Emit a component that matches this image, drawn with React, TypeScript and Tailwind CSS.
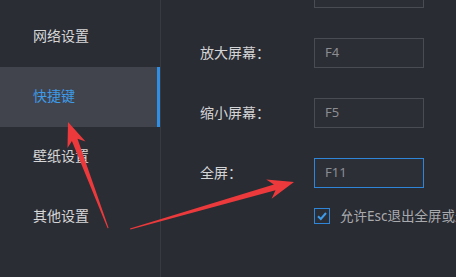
import React from 'react';

const menu = ['网络设置', '快捷键', '壁纸设置', '其他设置'];

const rows = [
  { label: '', value: '' },
  { label: '放大屏幕：', value: 'F4' },
  { label: '缩小屏幕：', value: 'F5' },
  { label: '全屏：', value: 'F11', focused: true },
];

function Arrows() {
  return (
    <svg className="absolute inset-0 pointer-events-none" width="456" height="277" viewBox="0 0 456 277">
      <polygon
        points="68,122 85.5,141.5 77.5,138.7 108.6,228 107.6,228.3 71.9,140.9 67.5,148"
        fill="#ec3a3c"
      />
      <polygon
        points="294,182 271.6,198.7 275.5,190.3 130.4,229.4 130,228.6 273.9,184.5 266.2,179.5"
        fill="#ec3a3c"
      />
    </svg>
  );
}

export default function App() {
  return (
    <div
      className="relative w-[456px] h-[277px] overflow-hidden flex bg-[#2a2c33]"
      style={{ fontFamily: '"Noto Sans", "Noto Sans CJK SC", sans-serif' }}
    >
      <aside className="w-[161px] shrink-0 pt-[7px] bg-[#2b2d34] border-r border-[#383a41]">
        {menu.map((item, i) => {
          const active = i === 1;
          return (
            <div
              key={item}
              className={
                active
                  ? 'h-[60px] flex items-center pl-[33px] pb-[3px] text-[14px] text-[#3d9be9] bg-[#41444c] border-r-[3px] border-[#2f8fe6]'
                  : 'h-[60px] flex items-center pl-[33px] pb-[3px] text-[14px] text-[#d6d6d8]'
              }
            >
              {item}
            </div>
          );
        })}
      </aside>

      <main className="flex-1 pl-[39px] mt-[-22px] flex flex-col gap-[30px]">
        {rows.map((r, i) => (
          <div key={i} className="h-[30px] flex items-center">
            <span className="w-[114px] pb-[2px] text-[14px] text-[#d4d4d6]">{r.label}</span>
            <div
              className={
                r.focused
                  ? 'w-[110px] h-[30px] flex items-center pl-[10px] text-[13px] text-[#8c8d92] bg-[#2d2f37] border border-[#2f86d8]'
                  : 'w-[110px] h-[30px] flex items-center pl-[10px] text-[13px] text-[#8c8d92] bg-[#2c2e35] border border-[#4a4c53]'
              }
            >
              {r.value}
            </div>
          </div>
        ))}
        <div className="flex items-center mt-[-12px] pl-[114px] whitespace-nowrap">
          <span className="w-[16px] h-[16px] flex items-center justify-center border border-[#2f86d8] bg-[#2c2e35] shrink-0">
            <svg width="12" height="12" viewBox="0 0 12 12">
              <path d="M2 6.2 L4.8 9 L10 3" fill="none" stroke="#3d9be9" strokeWidth="2" />
            </svg>
          </span>
          <span className="ml-[10px] text-[13.5px] text-[#a9aaae]">允许Esc退出全屏或最大化</span>
        </div>
      </main>

      <Arrows />
    </div>
  );
}
